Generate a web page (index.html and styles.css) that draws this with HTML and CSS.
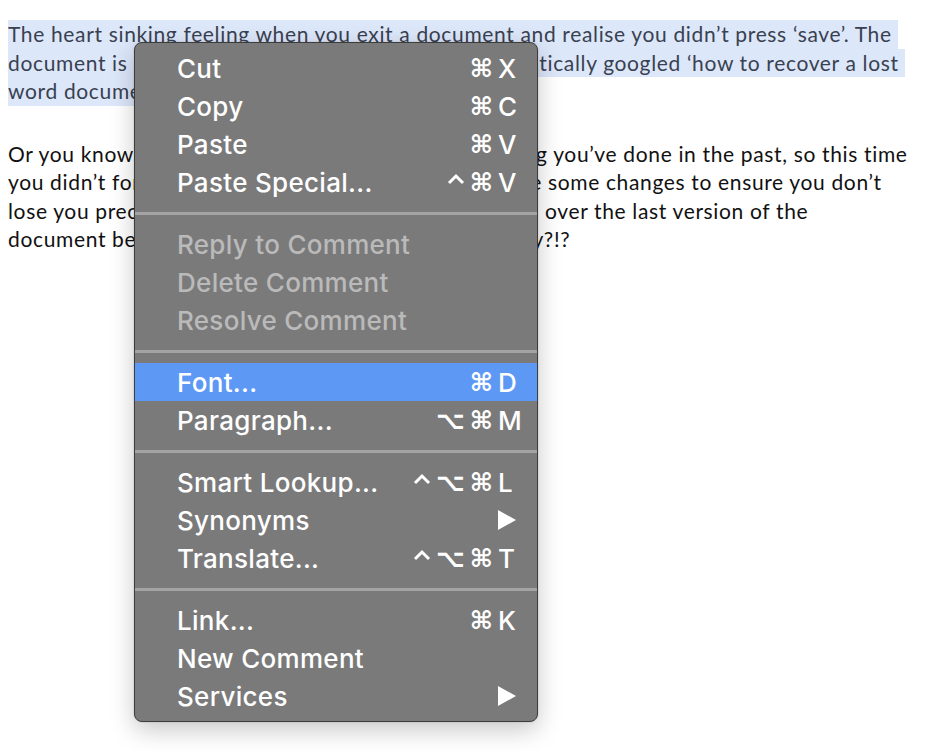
FILE: index.html
```html
<!DOCTYPE html>
<html lang="en">
<head>
<meta charset="utf-8">
<title>Context menu</title>
<link rel="stylesheet" href="styles.css">
</head>
<body>
<div class="doc">
  <div class="para selected">
    <div class="line">The heart sinking feeling when you exit a document and realise you didn’t press ‘save’. The </div>
    <div class="line">document is now gone forever and you’ve already frantically googled ‘how to recover a lost </div>
    <div class="line">word document’. </div>
  </div>
  <div class="para">
    <div class="line">Or you know the feeling because it’s exactly something you’ve done in the past, so this time</div>
    <div class="line">you didn’t forget to save it, but you’d now like to make some changes to ensure you don’t</div>
    <div class="line">lose you precious work, as you accidentally saved it all over the last version of the</div>
    <div class="line">document before realising. How to recover this quickly?!?</div>
  </div>
</div>

<div class="menu">
  <div class="group">
    <div class="item"><span class="label">Cut</span><span class="keys"><span class="mod">⌘</span><span class="key">X</span></span></div>
    <div class="item"><span class="label">Copy</span><span class="keys"><span class="mod">⌘</span><span class="key">C</span></span></div>
    <div class="item"><span class="label">Paste</span><span class="keys"><span class="mod">⌘</span><span class="key">V</span></span></div>
    <div class="item"><span class="label">Paste Special...</span><span class="keys"><span class="mod ctrl"><svg viewBox="0 0 18 12" width="18" height="12"><polyline points="2,10 9,3 16,10" fill="none" stroke="#fff" stroke-width="3"/></svg></span><span class="mod">⌘</span><span class="key">V</span></span></div>
  </div>
  <div class="sep"></div>
  <div class="group">
    <div class="item disabled"><span class="label">Reply to Comment</span></div>
    <div class="item disabled"><span class="label">Delete Comment</span></div>
    <div class="item disabled"><span class="label">Resolve Comment</span></div>
  </div>
  <div class="sep"></div>
  <div class="group">
    <div class="item active"><span class="label">Font...</span><span class="keys"><span class="mod">⌘</span><span class="key">D</span></span></div>
    <div class="item"><span class="label">Paragraph...</span><span class="keys"><span class="mod">⌥</span><span class="mod">⌘</span><span class="key">M</span></span></div>
  </div>
  <div class="sep"></div>
  <div class="group">
    <div class="item"><span class="label">Smart Lookup...</span><span class="keys"><span class="mod ctrl"><svg viewBox="0 0 18 12" width="18" height="12"><polyline points="2,10 9,3 16,10" fill="none" stroke="#fff" stroke-width="3"/></svg></span><span class="mod">⌥</span><span class="mod">⌘</span><span class="key">L</span></span></div>
    <div class="item"><span class="label">Synonyms</span><span class="keys"><span class="key"><svg class="arrow" viewBox="0 0 18 20" width="18" height="20"><path d="M0 0 L18 10 L0 20 Z" fill="#fff"/></svg></span></span></div>
    <div class="item"><span class="label">Translate...</span><span class="keys"><span class="mod ctrl"><svg viewBox="0 0 18 12" width="18" height="12"><polyline points="2,10 9,3 16,10" fill="none" stroke="#fff" stroke-width="3"/></svg></span><span class="mod">⌥</span><span class="mod">⌘</span><span class="key">T</span></span></div>
  </div>
  <div class="sep"></div>
  <div class="group">
    <div class="item"><span class="label">Link...</span><span class="keys"><span class="mod">⌘</span><span class="key">K</span></span></div>
    <div class="item"><span class="label">New Comment</span></div>
    <div class="item"><span class="label">Services</span><span class="keys"><span class="key"><svg class="arrow" viewBox="0 0 18 20" width="18" height="20"><path d="M0 0 L18 10 L0 20 Z" fill="#fff"/></svg></span></span></div>
  </div>
</div>
</body>
</html>
```

FILE: styles.css
```css
html, body {
  margin: 0;
  padding: 0;
  background: #ffffff;
}

body {
  width: 940px;
  height: 752px;
  overflow: hidden;
  position: relative;
  font-family: "Lato", "Open Sans", sans-serif;
}

.doc {
  padding: 20px 0 0 8px;
  font-size: 21px;
  letter-spacing: 0.65px;
  line-height: 28.5px;
  color: #111111;
}

.para {
  margin-bottom: 34px;
}

.line {
  width: fit-content;
  white-space: pre;
}

.selected .line {
  background: #dde7fa;
  color: #394150;
}

.menu {
  position: absolute;
  left: 134px;
  top: 42px;
  width: 402px;
  padding: 6px 0;
  background: #7a7a7a;
  border: 1px solid #3c3c3c;
  border-radius: 8px;
  box-shadow: 0 8px 24px rgba(0, 0, 0, 0.22), 0 0 2px rgba(0, 0, 0, 0.2);
  font-family: "Inter", "Liberation Sans", sans-serif;
  font-size: 26px;
  letter-spacing: 0.3px;
  font-weight: 500;
  color: #ffffff;
}

.item {
  display: flex;
  align-items: center;
  justify-content: space-between;
  height: 38px;
  padding: 0 15px 0 42px;
}

.item.disabled {
  color: #bababa;
}

.item.active {
  background: #5c98f4;
}

.keys {
  display: flex;
  align-items: center;
}

.mod {
  font-family: "DejaVu Sans", sans-serif;
  font-weight: bold;
  font-size: 25px;
  letter-spacing: 0;
  margin-right: 5px;
  display: flex;
  align-items: center;
}

.mod.ctrl {
  margin-right: 5px;
  padding-bottom: 6px;
}

.mod svg {
  display: block;
}

.key {
  width: 24px;
  display: flex;
  align-items: center;
}

.arrow {
  display: block;
}

.sep {
  height: 3px;
  margin: 11px 0 10px;
  background: #a3a3a3;
}
```
